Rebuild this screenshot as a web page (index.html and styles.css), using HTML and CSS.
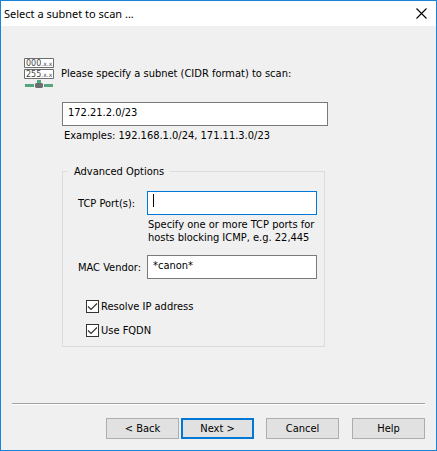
FILE: index.html
```html
<!DOCTYPE html>
<html lang="en">
<head>
<meta charset="UTF-8">
<meta name="viewport" content="width=device-width, initial-scale=1.0">
<title>Select a subnet to scan ...</title>
<link rel="stylesheet" href="styles.css">
</head>
<body>
<form class="dialog">
  <header class="titlebar">
    <h1>Select a subnet to scan ...</h1>
    <button type="button" class="close" aria-label="Close">
      <svg width="11" height="11" viewBox="0 0 11 11"><path d="M.5 .5l10 10M10.5 .5l-10 10" stroke="#000" stroke-width="1.1"/></svg>
    </button>
  </header>

  <main class="content">
    <svg class="subnet-icon" width="30" height="30" viewBox="0 0 30 30">
      <path fill="#fff" stroke="#6d6d6d" d="M.5 .5h29v9h-29zM.5 11.5h29v9h-29z"/>
      <g class="icon-text">
        <text x="2" y="8">000<tspan class="small">.x.x</tspan></text>
        <text x="2" y="19">255<tspan class="small">.x.x</tspan></text>
      </g>
      <path fill="#55a57e" d="M13 22h4v3h-4zM1 26h28v3H1z"/>
      <path fill="#f0f0f0" d="M10 25h10v5H10z"/>
      <path fill="#6d6d6d" d="M12 25h6l1 1v3l-1 1h-6l-1-1v-3z"/>
    </svg>
    <label class="prompt" for="subnet">Please specify a subnet (CIDR format) to scan:</label>

    <div class="fields">
      <input type="text" id="subnet" value="172.21.2.0/23">
      <p class="examples">Examples: 192.168.1.0/24, 171.11.3.0/23</p>

      <fieldset>
        <legend>Advanced Options</legend>
        <div class="options">
          <label for="ports">TCP Port(s):</label>
          <input type="text" id="ports" class="active">
          <p class="hint">Specify one or more TCP ports for<br>hosts blocking ICMP, e.g. 22,445</p>
          <label for="vendor">MAC Vendor:</label>
          <input type="text" id="vendor" value="*canon*">
        </div>
        <div class="checks">
          <label><input type="checkbox" checked>Resolve IP address</label>
          <label><input type="checkbox" checked>Use FQDN</label>
        </div>
      </fieldset>
    </div>
  </main>

  <footer class="buttons">
    <button type="button">&lt; Back</button>
    <button type="submit" class="default">Next &gt;</button>
    <button type="button" class="cancel">Cancel</button>
    <button type="button" class="help">Help</button>
  </footer>
</form>
</body>
</html>
```
FILE: styles.css
```css
* {
  box-sizing: border-box;
}

body {
  margin: 0;
  font: 11px/13px Tahoma, "DejaVu Sans Condensed", sans-serif;
  color: #000;
}

.dialog {
  display: flex;
  flex-direction: column;
  min-height: 100vh;
  border: 1px solid #1883d7;
  background: #f0f0f0;
}

.titlebar {
  display: flex;
  align-items: center;
  justify-content: space-between;
  height: 25px;
  padding: 0 9px 0 3px;
  background: #fff;
}

.titlebar h1 {
  margin: 0;
  font: 11px/16px "Segoe UI", "Noto Sans", sans-serif;
}

.close {
  display: flex;
  padding: 0;
  border: 0;
  background: none;
}

.content {
  flex: 1;
  display: grid;
  grid-template-columns: 30px minmax(0, 1fr);
  grid-template-rows: 30px auto;
  column-gap: 7px;
  row-gap: 14px;
  padding: 32px 108px 0 23px;
}

.prompt {
  align-self: center;
}

.icon-text {
  font: 8px "DejaVu Sans", sans-serif;
  fill: #444;
}

.icon-text .small {
  font-size: 6px;
}

.fields {
  grid-column: 2;
  padding-left: 1px;
}

input[type="text"] {
  display: block;
  width: 100%;
  height: 24px;
  padding: 0 5px 3px;
  border: 1px solid #7a7a7a;
  background: #fff;
  font: inherit;
  outline: none;
}

/* focused field with its text cursor */
input[type="text"].active {
  border-color: #0078d7;
  background: linear-gradient(#000, #000) 5px 2px / 1px 13px no-repeat #fff;
}

.examples {
  margin: 3px 2px 0;
}

fieldset {
  margin: 23px 3px 0 0;
  padding: 13px 7px 9px 15px;
  border: 1px solid #dcdcdc;
}

legend {
  margin-left: -10px;
  padding: 0 6px;
}

.options {
  display: grid;
  grid-template-columns: 69px minmax(0, 1fr);
  align-items: center;
}

.hint {
  grid-column: 2;
  margin: 3px 0 11px 1px;
  white-space: nowrap;
}

.checks {
  display: grid;
  gap: 11px;
  margin: 21px 0 0 8px;
}

.checks label {
  display: flex;
  align-items: center;
  gap: 2px;
}

.checks input {
  appearance: none;
  width: 13px;
  height: 13px;
  margin: 0;
  border: 1px solid #333;
  background: #fff;
}

.checks input:checked {
  background: #fff url("data:image/svg+xml,%3Csvg xmlns='http://www.w3.org/2000/svg' viewBox='0 0 11 11'%3E%3Cpath d='M1 5.5l3 3 6-6' fill='none' stroke='%23333' stroke-width='1.2'/%3E%3C/svg%3E");
}

.buttons {
  display: flex;
  justify-content: flex-end;
  margin: 0 11px;
  padding: 14px 0 11px;
  border-top: 1px solid #a0a0a0;
  box-shadow: inset 0 1px #fff;
}

.buttons button {
  width: 73px;
  height: 21px;
  padding: 0;
  border: 1px solid #adadad;
  background: #e1e1e1;
  font: inherit;
}

.buttons .default {
  margin-left: 2px;
  border: 2px solid #0078d7;
}

.buttons .cancel {
  margin-left: 12px;
}

.buttons .help {
  margin-left: 13px;
}
```
